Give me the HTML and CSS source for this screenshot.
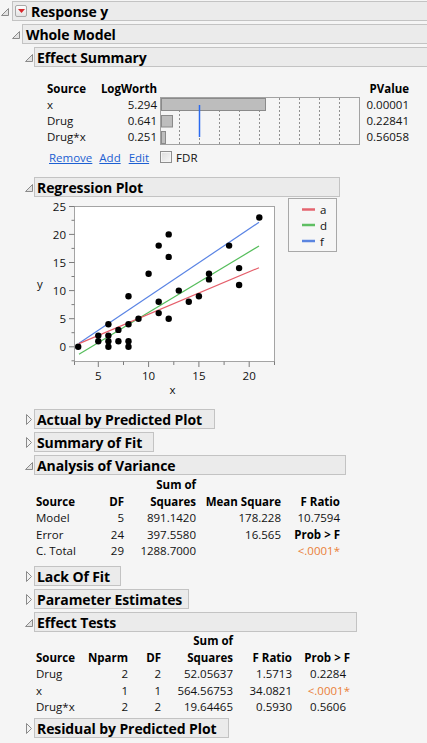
FILE: index.html
```html
<!DOCTYPE html>
<html>
<head>
<meta charset="utf-8">
<title>Response y</title>
<link rel="stylesheet" href="styles.css">
</head>
<body>
<div class="report">

  <div class="hdr">
    <div class="ic ic0"><svg class="tri-open" width="8" height="8" viewBox="0 0 8 8"><polygon points="0.5,7.5 7.5,0.5 7.5,7.5"/></svg></div>
    <div class="bar bar-full">
      <span class="menu"><svg width="7" height="4" viewBox="0 0 7 4"><polygon points="0,0 7,0 3.5,4"/></svg></span>
      <span class="title">Response y</span>
    </div>
  </div>

  <div class="hdr">
    <div class="ic ic1"><svg class="tri-open" width="8" height="8" viewBox="0 0 8 8"><polygon points="0.5,7.5 7.5,0.5 7.5,7.5"/></svg></div>
    <div class="bar bar-full pad3">Whole Model</div>
  </div>

  <div class="hdr">
    <div class="ic ic2"><svg class="tri-open" width="8" height="8" viewBox="0 0 8 8"><polygon points="0.5,7.5 7.5,0.5 7.5,7.5"/></svg></div>
    <div class="bar bar-full">Effect Summary</div>
  </div>

  <div class="es-body">
    <div class="es-grid">
      <div class="b">Source</div>
      <div class="r b">LogWorth</div>
      <div></div>
      <div class="r b">PValue</div>

      <div>x</div>
      <div class="r">5.294</div>
      <div class="es-chart">
        <svg width="200" height="48" viewBox="0 0 200 48">
          <g stroke="#8f8f8f" stroke-width="1" stroke-dasharray="2 2">
            <line x1="19.5" y1="1" x2="19.5" y2="47"/>
            <line x1="39.5" y1="1" x2="39.5" y2="47"/>
            <line x1="59.5" y1="1" x2="59.5" y2="47"/>
            <line x1="79.5" y1="1" x2="79.5" y2="47"/>
            <line x1="99.5" y1="1" x2="99.5" y2="47"/>
            <line x1="119.5" y1="1" x2="119.5" y2="47"/>
            <line x1="139.5" y1="1" x2="139.5" y2="47"/>
            <line x1="159.5" y1="1" x2="159.5" y2="47"/>
            <line x1="179.5" y1="1" x2="179.5" y2="47"/>
          </g>
          <rect x="0.5" y="0.5" width="199" height="47" fill="none" stroke="#a2a2a2"/>
          <g fill="#bdbdbd" stroke="#8a8a8a">
            <rect x="1.5" y="1.5" width="104" height="12"/>
            <rect x="1.5" y="18.5" width="11" height="11.5"/>
            <rect x="1.5" y="34.5" width="4" height="12"/>
          </g>
          <line x1="39.5" y1="8" x2="39.5" y2="40" stroke="#2a6af0" stroke-width="1.5"/>
        </svg>
      </div>
      <div class="r">0.00001</div>

      <div>Drug</div>
      <div class="r">0.641</div>
      <div class="r">0.22841</div>

      <div>Drug*x</div>
      <div class="r">0.251</div>
      <div class="r">0.56058</div>
    </div>

    <div class="links">
      <a class="lnk lnk-remove">Remove</a>
      <a class="lnk lnk-add">Add</a>
      <a class="lnk lnk-edit">Edit</a>
      <span class="chk"></span>
      <span>FDR</span>
    </div>
  </div>

  <div class="hdr">
    <div class="ic ic2"><svg class="tri-open" width="8" height="8" viewBox="0 0 8 8"><polygon points="0.5,7.5 7.5,0.5 7.5,7.5"/></svg></div>
    <div class="bar w-reg">Regression Plot</div>
  </div>

  <div class="plot">
    <svg class="plot-svg" width="306" height="209" viewBox="34 200 306 209">
      <rect x="74.5" y="206.5" width="200" height="155" fill="#ffffff" stroke="#a4a4a4"/>
      <g stroke="#7c7c7c" stroke-width="1">
        <line x1="69" y1="346.8" x2="74.5" y2="346.8"/>
        <line x1="69" y1="318.7" x2="74.5" y2="318.7"/>
        <line x1="69" y1="290.6" x2="74.5" y2="290.6"/>
        <line x1="69" y1="262.5" x2="74.5" y2="262.5"/>
        <line x1="69" y1="234.4" x2="74.5" y2="234.4"/>
        <line x1="69" y1="206.5" x2="74.5" y2="206.5"/>
        <line x1="71.5" y1="360.8" x2="74.5" y2="360.8"/>
        <line x1="71.5" y1="332.7" x2="74.5" y2="332.7"/>
        <line x1="71.5" y1="304.6" x2="74.5" y2="304.6"/>
        <line x1="71.5" y1="276.5" x2="74.5" y2="276.5"/>
        <line x1="71.5" y1="248.4" x2="74.5" y2="248.4"/>
        <line x1="71.5" y1="220.3" x2="74.5" y2="220.3"/>
        <line x1="98.3" y1="361.5" x2="98.3" y2="367"/>
        <line x1="148.6" y1="361.5" x2="148.6" y2="367"/>
        <line x1="198.9" y1="361.5" x2="198.9" y2="367"/>
        <line x1="249.2" y1="361.5" x2="249.2" y2="367"/>
        <line x1="74.5" y1="361.5" x2="74.5" y2="365"/>
        <line x1="123.5" y1="361.5" x2="123.5" y2="365"/>
        <line x1="173.8" y1="361.5" x2="173.8" y2="365"/>
        <line x1="224.1" y1="361.5" x2="224.1" y2="365"/>
        <line x1="274.5" y1="361.5" x2="274.5" y2="365"/>
      </g>
      <g class="ax" text-anchor="end">
        <text x="66" y="210.5">25</text>
        <text x="66" y="238.6">20</text>
        <text x="66" y="266.7">15</text>
        <text x="66" y="294.8">10</text>
        <text x="66" y="322.9">5</text>
        <text x="66" y="351">0</text>
      </g>
      <g class="ax" text-anchor="middle">
        <text x="98.3" y="379.5">5</text>
        <text x="148.6" y="379.5">10</text>
        <text x="198.9" y="379.5">15</text>
        <text x="249.2" y="379.5">20</text>
        <text x="40" y="287.5">y</text>
        <text x="172.5" y="394">x</text>
      </g>
      <g stroke-width="1.2" fill="none">
        <line x1="79" y1="343.3" x2="259" y2="222.3" stroke="#5a84e4"/>
        <line x1="79" y1="354.3" x2="259" y2="246" stroke="#55bd5b"/>
        <line x1="79" y1="343.6" x2="259" y2="267.7" stroke="#e55f6b"/>
      </g>
      <g fill="#000000">
        <circle cx="78.2" cy="346.8" r="3.2"/>
        <circle cx="98.3" cy="341.2" r="3.2"/>
        <circle cx="98.3" cy="335.6" r="3.2"/>
        <circle cx="108.4" cy="346.8" r="3.2"/>
        <circle cx="108.4" cy="341.2" r="3.2"/>
        <circle cx="108.4" cy="335.6" r="3.2"/>
        <circle cx="108.4" cy="324.3" r="3.2"/>
        <circle cx="118.4" cy="341.2" r="3.2"/>
        <circle cx="118.4" cy="329.9" r="3.2"/>
        <circle cx="128.5" cy="346.8" r="3.2"/>
        <circle cx="128.5" cy="341.2" r="3.2"/>
        <circle cx="128.5" cy="324.3" r="3.2"/>
        <circle cx="128.5" cy="296.2" r="3.2"/>
        <circle cx="138.5" cy="318.7" r="3.2"/>
        <circle cx="148.6" cy="273.7" r="3.2"/>
        <circle cx="158.7" cy="313.1" r="3.2"/>
        <circle cx="158.7" cy="301.8" r="3.2"/>
        <circle cx="158.7" cy="245.6" r="3.2"/>
        <circle cx="168.7" cy="318.7" r="3.2"/>
        <circle cx="168.7" cy="256.9" r="3.2"/>
        <circle cx="168.7" cy="234.4" r="3.2"/>
        <circle cx="178.8" cy="290.6" r="3.2"/>
        <circle cx="188.8" cy="301.8" r="3.2"/>
        <circle cx="198.9" cy="296.2" r="3.2"/>
        <circle cx="209" cy="279.4" r="3.2"/>
        <circle cx="209" cy="273.7" r="3.2"/>
        <circle cx="229.1" cy="245.6" r="3.2"/>
        <circle cx="239.1" cy="285" r="3.2"/>
        <circle cx="239.1" cy="268.1" r="3.2"/>
        <circle cx="259.3" cy="217.5" r="3.2"/>
      </g>
      <rect x="288.5" y="198.5" width="48" height="53" fill="#f6f6f6" stroke="#a8a8a8"/>
      <g stroke-width="2.5">
        <line x1="302" y1="209.5" x2="315" y2="209.5" stroke="#e4646f"/>
        <line x1="302" y1="225" x2="315" y2="225" stroke="#5fbf63"/>
        <line x1="302" y1="241" x2="315" y2="241" stroke="#5b85e0"/>
      </g>
      <g class="ax">
        <text x="320" y="214">a</text>
        <text x="320" y="230">d</text>
        <text x="320" y="246">f</text>
      </g>
    </svg>
  </div>

  <div class="hdr">
    <div class="ic ic2c"><svg class="tri-closed" width="6" height="11" viewBox="0 0 6 11"><polygon points="0.5,0.5 5.5,5.5 0.5,10.5"/></svg></div>
    <div class="bar w-act">Actual by Predicted Plot</div>
  </div>

  <div class="hdr">
    <div class="ic ic2c"><svg class="tri-closed" width="6" height="11" viewBox="0 0 6 11"><polygon points="0.5,0.5 5.5,5.5 0.5,10.5"/></svg></div>
    <div class="bar w-sof">Summary of Fit</div>
  </div>

  <div class="hdr">
    <div class="ic ic2"><svg class="tri-open" width="8" height="8" viewBox="0 0 8 8"><polygon points="0.5,7.5 7.5,0.5 7.5,7.5"/></svg></div>
    <div class="bar w-aov">Analysis of Variance</div>
  </div>

  <div class="tbl anova">
    <div></div><div></div><div class="r b">Sum of</div><div></div><div></div>
    <div class="b">Source</div><div class="r b">DF</div><div class="r b">Squares</div><div class="r b">Mean Square</div><div class="r b">F Ratio</div>
    <div>Model</div><div class="r">5</div><div class="r">891.1420</div><div class="r">178.228</div><div class="r">10.7594</div>
    <div>Error</div><div class="r">24</div><div class="r">397.5580</div><div class="r">16.565</div><div class="r b">Prob &gt; F</div>
    <div>C. Total</div><div class="r">29</div><div class="r">1288.7000</div><div></div><div class="r sig">&lt;.0001*</div>
  </div>

  <div class="hdr">
    <div class="ic ic2c"><svg class="tri-closed" width="6" height="11" viewBox="0 0 6 11"><polygon points="0.5,0.5 5.5,5.5 0.5,10.5"/></svg></div>
    <div class="bar w-lof">Lack Of Fit</div>
  </div>

  <div class="hdr">
    <div class="ic ic2c"><svg class="tri-closed" width="6" height="11" viewBox="0 0 6 11"><polygon points="0.5,0.5 5.5,5.5 0.5,10.5"/></svg></div>
    <div class="bar w-pe">Parameter Estimates</div>
  </div>

  <div class="hdr">
    <div class="ic ic2"><svg class="tri-open" width="8" height="8" viewBox="0 0 8 8"><polygon points="0.5,7.5 7.5,0.5 7.5,7.5"/></svg></div>
    <div class="bar w-et">Effect Tests</div>
  </div>

  <div class="tbl etests">
    <div></div><div></div><div></div><div class="r b">Sum of</div><div></div><div></div>
    <div class="b">Source</div><div class="r b">Nparm</div><div class="r b">DF</div><div class="r b">Squares</div><div class="r b">F Ratio</div><div class="r b">Prob &gt; F</div>
    <div>Drug</div><div class="r">2</div><div class="r">2</div><div class="r">52.05637</div><div class="r">1.5713</div><div class="r pv">0.2284</div>
    <div>x</div><div class="r">1</div><div class="r">1</div><div class="r">564.56753</div><div class="r">34.0821</div><div class="r sig">&lt;.0001*</div>
    <div>Drug*x</div><div class="r">2</div><div class="r">2</div><div class="r">19.64465</div><div class="r">0.5930</div><div class="r pv">0.5606</div>
  </div>

  <div class="hdr">
    <div class="ic ic2c"><svg class="tri-closed" width="6" height="11" viewBox="0 0 6 11"><polygon points="0.5,0.5 5.5,5.5 0.5,10.5"/></svg></div>
    <div class="bar w-res">Residual by Predicted Plot</div>
  </div>

</div>
</body>
</html>
```

FILE: styles.css
```css
html, body {
  margin: 0;
  padding: 0;
  background: #f5f5f5;
  overflow: hidden;
}

body {
  font-family: "Open Sans", "Noto Sans", sans-serif;
  font-size: 11.5px;
  color: #111111;
}

.report {
  padding-top: 1px;
  width: 427px;
}

/* outline headers */
.hdr {
  display: flex;
  align-items: center;
  height: 20px;
  margin-bottom: 3px;
}

.ic {
  flex: 0 0 auto;
  box-sizing: border-box;
  height: 20px;
  display: flex;
  align-items: center;
  justify-content: flex-end;
}
.ic0 { width: 12px; padding-right: 3px; }
.ic1 { width: 22px; padding-right: 2px; }
.ic2 { width: 34px; padding-right: 1px; }
.ic2c { width: 34px; padding-right: 2px; }

.tri-open {
  display: block;
  margin-top: 2px;
}
.tri-open polygon {
  fill: #e2e2e2;
  stroke: #8a8a8a;
  stroke-width: 1;
}
.tri-closed {
  display: block;
}
.tri-closed polygon {
  fill: #f2f2f2;
  stroke: #8a8a8a;
  stroke-width: 1;
}

.bar {
  flex: 0 0 auto;
  box-sizing: border-box;
  height: 20px;
  border: 1px solid #c3c3c3;
  background: #ebebeb;
  display: flex;
  align-items: center;
  padding-left: 2px;
  font-weight: 700;
  font-size: 14px;
  letter-spacing: -0.1px;
  color: #000000;
  white-space: nowrap;
}
.pad3 { padding-left: 3px; }
.bar-full {
  flex: 1 1 auto;
  border-right-width: 0;
}
.w-reg { width: 306px; }
.w-act { width: 181px; }
.w-sof { width: 120px; }
.w-aov { width: 312px; }
.w-lof { width: 87px; }
.w-pe { width: 155px; }
.w-et { width: 323px; }
.w-res { width: 195px; }

.menu {
  box-sizing: border-box;
  width: 12px;
  height: 12px;
  border: 1px solid #a9a9a9;
  border-radius: 2px;
  background: linear-gradient(#fdfdfd, #e3e3e3);
  display: flex;
  align-items: center;
  justify-content: center;
  margin-right: 4px;
}
.menu svg {
  display: block;
  fill: #d8262b;
}

/* effect summary */
.es-body {
  padding-top: 11px;
  padding-bottom: 12px;
}
.es-grid {
  margin-left: 47px;
  display: grid;
  grid-template-columns: 51px 59px 203px 49px;
  grid-auto-rows: 16px;
  line-height: 16px;
}
.es-chart {
  grid-column: 3;
  grid-row: 2 / span 3;
  padding-left: 3px;
}
.es-chart svg { display: block; }

.links {
  margin-left: 49px;
  margin-top: 4px;
  height: 16px;
  display: flex;
  align-items: center;
}
.lnk {
  color: #1c5fd2;
  text-decoration: underline;
  cursor: pointer;
}
.lnk-remove { margin-right: 7px; }
.lnk-add { margin-right: 8px; }
.lnk-edit { margin-right: 11px; }
.chk {
  box-sizing: border-box;
  width: 12px;
  height: 12px;
  border: 1px solid #8e8e8e;
  background: linear-gradient(135deg, #dcdcdc, #f7f7f7);
  box-shadow: inset 0 0 0 1px #f4f4f4;
  margin-right: 4px;
}

/* plot */
.plot {
  margin-left: 34px;
  height: 209px;
}
.plot-svg {
  display: block;
  overflow: visible;
}
.ax {
  font-family: "Open Sans", "Noto Sans", sans-serif;
  font-size: 11.5px;
  fill: #111111;
}

/* tables */
.tbl {
  display: grid;
  margin-left: 36px;
  grid-auto-rows: 16.5px;
  line-height: 16.5px;
  white-space: nowrap;
}
.anova {
  grid-template-columns: 58px 30px 72px 85px 59px;
  margin-top: -1px;
  padding-bottom: 6.5px;
}
.etests {
  grid-template-columns: 50px 42px 33px 72px 59px 58px;
  margin-top: -2px;
  padding-bottom: 2.5px;
}

.r { text-align: right; }
.b { font-weight: 700; color: #000000; }
.sig { color: #ea7f38; }
.pv { padding-right: 4px; }
```
